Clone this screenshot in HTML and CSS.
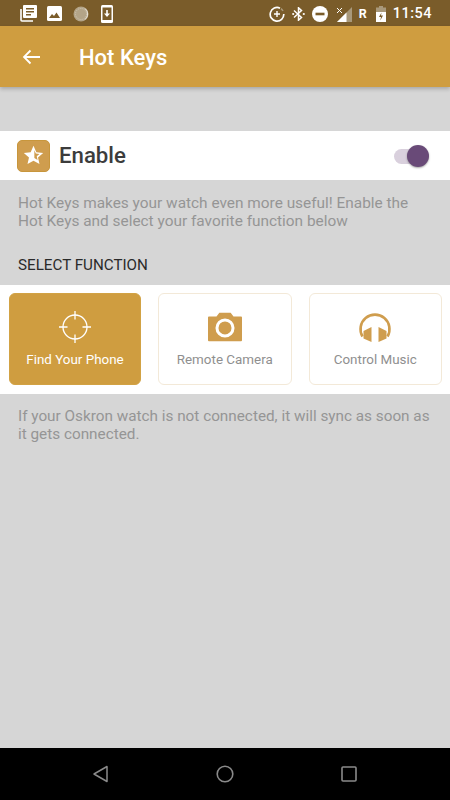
FILE: index.html
```html
<!DOCTYPE html>
<html lang="en">
<head>
<meta charset="utf-8">
<title>Hot Keys</title>
<link rel="stylesheet" href="styles.css">
</head>
<body>
<div class="screen">
  <header class="status">
    <div class="status-left">
      <svg class="s-news" viewBox="0 0 17 17"><path d="M4 0h12a1 1 0 0 1 1 1v11a1 1 0 0 1-1 1H4a1 1 0 0 1-1-1V1a1 1 0 0 1 1-1z" fill="#fff"/><path d="M6 3h8v1.6H6zM6 6h8v1.6H6zM6 9h5v1.6H6z" fill="#7a5c2a"/><path d="M1 4v11a1 1 0 0 0 1 1h11" fill="none" stroke="#fff" stroke-width="1.6"/></svg>
      <svg class="s-img" viewBox="0 0 15 15"><rect width="15" height="15" rx="1.5" fill="#fff"/><path d="M2 12l3-4 2 2 2.500-3.500L13 12z" fill="#7a5c2a"/></svg>
      <svg class="s-disc" viewBox="0 0 16 16"><circle cx="8" cy="8" r="7.500" fill="#b3a488"/><circle cx="8" cy="8" r="5.500" fill="none" stroke="#cfc6b4" stroke-width="1" stroke-dasharray="1 1"/><path d="M12 2.500a7 7 0 0 1 0 11" fill="none" stroke="#e8e3d8" stroke-width="1"/></svg>
      <svg class="s-dl" viewBox="0 0 12 18"><rect width="12" height="18" rx="1.500" fill="#fff"/><rect x="1.500" y="2.500" width="9" height="12.500" fill="#7a5c2a"/><path d="M5.200 5h1.600v3.500H9L6 12 3 8.500h2.200z" fill="#fff"/></svg>
    </div>
    <div class="status-right">
      <svg class="s-saver" viewBox="0 0 16 16"><path d="M11 2.200A6.800 6.800 0 1 0 14.800 8" fill="none" stroke="#fff" stroke-width="1.700"/><path d="M14 5a7 7 0 0 0-2-2.300" fill="none" stroke="#a8987a" stroke-width="1.500"/><path d="M7.300 5h1.400v2.300H11v1.400H8.700V11H7.300V8.700H5V7.300h2.300z" fill="#fff"/></svg>
      <svg class="s-bt" viewBox="0 0 13 14"><path d="M2 3.500l7.500 7-3 2.700V.8l3 2.700-7.500 7" fill="none" stroke="#fff" stroke-width="1.500"/><circle cx="1.200" cy="7" r="1.100" fill="#fff"/><circle cx="11.800" cy="7" r="1.100" fill="#fff"/></svg>
      <svg class="s-dnd" viewBox="0 0 16 16"><circle cx="8" cy="8" r="8" fill="#fff"/><rect x="3.500" y="6.700" width="9" height="2.600" fill="#7a5c2a"/></svg>
      <svg class="s-signal" viewBox="0 0 15 15"><path d="M15 0v15H0z" fill="#a8987a"/><path d="M9.500 5.500V15H0z" fill="#fff"/><path d="M0 1l5 5M5 1L0 6" stroke="#fff" stroke-width="1"/></svg>
      <span class="s-r">R</span>
      <svg class="s-batt" viewBox="0 0 10 16"><path d="M3 0h4v1.500h3V16H0V1.500h3z" fill="#a8987a"/><path d="M0 6h10v10H0z" fill="#fff"/><path d="M5.500 6.500L3 11h2l-.7 3.500L7 9.500H5z" fill="#7a5c2a"/></svg>
      <span class="clock">11:54</span>
    </div>
  </header>

  <div class="appbar">
    <svg class="back" viewBox="0 0 18 16"><path d="M18 8H2M8.500 1.500L2 8l6.500 6.500" fill="none" stroke="#fff" stroke-width="1.800"/></svg>
    <h1 class="title">Hot Keys</h1>
  </div>

  <main class="content">
    <section class="enable">
      <div class="enable-label">
        <span class="badge">
          <svg class="star" viewBox="0 0 20 20"><path d="M10 .8l2.700 6 6.500.7-4.900 4.300 1.400 6.400L10 14.900l-5.700 3.300 1.400-6.400L.8 7.500l6.500-.7z" fill="#fff"/><path d="M10.800 5l1.400 3.100 3.500.4-2.600 2.300.8 3.400-3.100-1.800z" fill="#cf9d4e"/></svg>
        </span>
        <span class="enable-text">Enable</span>
      </div>
      <div class="switch"><span class="track"></span><span class="thumb"></span></div>
    </section>

    <p class="hint hint-top">Hot Keys makes your watch even more useful! Enable the Hot Keys and select your favorite function below</p>
    <h2 class="section-title">SELECT FUNCTION</h2>

    <section class="functions">
      <div class="tile tile-active">
        <svg class="tile-icon" viewBox="0 0 34 34"><circle cx="17" cy="17" r="12" fill="none" stroke="#fff" stroke-width="1.300"/><path d="M17 1v8.500M17 24.500V33M1 17h8.500M24.500 17H33" stroke="#fff" stroke-width="1.300"/></svg>
        <span class="tile-label">Find Your Phone</span>
      </div>
      <div class="tile">
        <svg class="tile-icon" viewBox="0 0 36 30"><path d="M1 4h8l3-4h12l3 4h8a1 1 0 0 1 1 1v24a1 1 0 0 1-1 1H1a1 1 0 0 1-1-1V5a1 1 0 0 1 1-1z" fill="#cf9d4e"/><circle cx="18" cy="16" r="8.500" fill="none" stroke="#fff" stroke-width="3.200"/></svg>
        <span class="tile-label">Remote Camera</span>
      </div>
      <div class="tile">
        <svg class="tile-icon" viewBox="0 0 34 30"><path d="M4.500 24.500A14.500 14.500 0 1 1 29.500 24.500" fill="none" stroke="#cf9d4e" stroke-width="2.600"/><path d="M13.500 15v15L5.500 26.500V19zM20.500 15v15L28.500 26.500V19z" fill="#cf9d4e"/></svg>
        <span class="tile-label">Control Music</span>
      </div>
    </section>

    <p class="hint hint-bottom">If your Oskron watch is not connected, it will sync as soon as it gets connected.</p>
  </main>

  <nav class="navbar">
    <svg class="nav-back" viewBox="0 0 15 18"><path d="M14 1.500v15L1 9z" fill="none" stroke="#8a8a8a" stroke-width="1.500" stroke-linejoin="round"/></svg>
    <svg class="nav-home" viewBox="0 0 18 18"><circle cx="9" cy="9" r="7.800" fill="none" stroke="#8a8a8a" stroke-width="1.600"/></svg>
    <svg class="nav-recent" viewBox="0 0 16 16"><rect x="1" y="1" width="14" height="14" rx="1" fill="none" stroke="#8a8a8a" stroke-width="1.600"/></svg>
  </nav>
</div>
</body>
</html>
```
FILE: styles.css
```css
* { box-sizing: border-box; }
html, body { margin: 0; padding: 0; }
body { font-family: Roboto, "Liberation Sans", sans-serif; }
svg { display: block; flex: none; }

.screen {
  width: 450px;
  height: 800px;
  overflow: hidden;
  display: flex;
  flex-direction: column;
  background: #d6d6d6;
}

.status {
  height: 26px;
  flex: none;
  background: #7a5c2a;
  display: flex;
  justify-content: space-between;
  align-items: center;
  padding: 1px 18px 0 20px;
}
.status-left, .status-right { display: flex; align-items: center; }
.status-right { padding-top: 1px; }
.s-news { width: 17px; height: 17px; }
.s-img { width: 15px; height: 15px; margin-left: 10px; }
.s-disc { width: 16px; height: 16px; margin-left: 11px; }
.s-dl { width: 12px; height: 18px; margin-left: 12px; }
.s-saver { width: 16px; height: 16px; }
.s-bt { width: 13px; height: 14px; margin-left: 7px; }
.s-dnd { width: 16px; height: 16px; margin-left: 7px; }
.s-signal { width: 15px; height: 15px; margin-left: 9px; }
.s-r { width: 8px; margin-left: 7px; font-size: 12.500px; font-weight: 700; line-height: 14px; color: #fff; }
.s-batt { width: 10px; height: 16px; margin-left: 9px; }
.clock { margin-left: 7px; font-size: 14.500px; font-weight: 500; letter-spacing: .5px; line-height: 18px; color: #fff; }

.appbar {
  height: 61px;
  flex: none;
  background: #cf9d40;
  box-shadow: 0 2px 4px rgba(0, 0, 0, .22);
  display: flex;
  align-items: center;
  padding: 3px 0 0 22px;
  z-index: 1;
}
.back { width: 18px; height: 16px; margin-bottom: 3px; }
.title { margin: 0 0 0 39px; font-size: 22px; font-weight: 500; color: #fff; line-height: 28px; }

.content { flex: 1; padding-top: 44px; }

.enable {
  height: 49px;
  background: #fff;
  display: flex;
  justify-content: space-between;
  align-items: center;
  padding: 0 21px 0 17px;
}
.enable-label { display: flex; align-items: center; }
.badge {
  width: 33px;
  height: 32px;
  border-radius: 5px;
  background: #cf9d4e;
  border: 1px solid #c8963c;
  display: flex;
  align-items: center;
  justify-content: center;
}
.star { width: 21px; height: 21px; }
.enable-text { margin: 0 0 2px 9px; font-size: 22.200px; font-weight: 500; color: #3c3c3c; line-height: 28px; }

.switch { position: relative; width: 35px; height: 22px; }
.track {
  position: absolute;
  left: 0;
  top: 4px;
  width: 30px;
  height: 15px;
  border-radius: 8px;
  background: #d9d0dd;
}
.thumb {
  position: absolute;
  right: 0;
  top: 0;
  width: 22px;
  height: 22px;
  border-radius: 50%;
  background: #694a78;
  box-shadow: 0 1px 2px rgba(0, 0, 0, .35);
}

.hint { margin: 0; padding: 0 15px 0 18px; font-size: 15.400px; line-height: 18px; color: #959595; }
.hint-top { padding-top: 14px; }
.section-title { margin: 26px 0 0; padding: 0 18px; font-size: 15.200px; font-weight: 400; line-height: 18px; color: #2a2a2a; }

.functions {
  margin-top: 11px;
  height: 109px;
  background: #fff;
  display: grid;
  grid-template-columns: 132px 133.500px 133.500px;
  column-gap: 17px;
  align-items: start;
  padding: 8px 0 0 9px;
}
.tile {
  height: 92px;
  border: 1px solid #f3e9d8;
  border-radius: 6px;
  display: flex;
  flex-direction: column;
  align-items: center;
  background: #fff;
  padding-top: 18px;
}
.tile-active { background: #cf9d40; border-color: #d2a244; }
.tile-icon { width: 34px; height: 30px; }
.tile-label { margin-top: 9px; font-size: 13.400px; line-height: 18px; color: #8f8f8f; }
.tile-active .tile-label { color: #fff; }
.tile-active .tile-icon { height: 34px; margin-top: -2px; margin-bottom: -2px; }

.hint-bottom { padding-top: 13px; font-size: 15.300px; }

.navbar {
  height: 52px;
  flex: none;
  background: #000;
  display: flex;
  justify-content: space-between;
  align-items: center;
  padding: 0 93px;
}
.nav-back { width: 15px; height: 18px; }
.nav-home { width: 18px; height: 18px; }
.nav-recent { width: 16px; height: 16px; }
```
